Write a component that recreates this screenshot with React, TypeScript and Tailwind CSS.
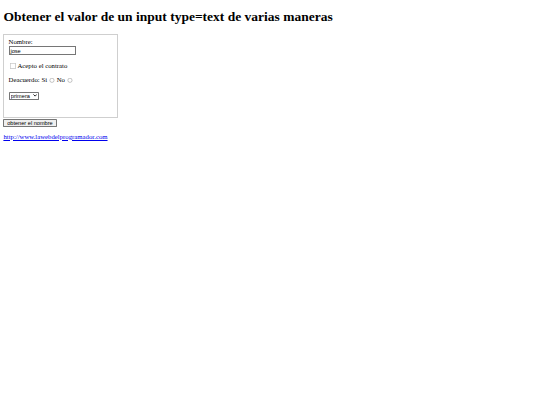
export default function App() {
  return (
    <div className="min-h-[405px] bg-white">
      {/* the page is drawn at 1280px wide and scaled down like the screenshot */}
      <div className="w-[1280px] px-[8px] pt-[21.44px] font-['Liberation_Serif',serif] text-[16px] leading-[18.4px] text-black [zoom:0.421875]">
        <h1 className="mb-[21.44px] text-[32px] font-bold leading-[37px]">
          Obtener el valor de un input type=text de varias maneras
        </h1>

        <form>
          <div className="h-[200px] w-[272px] border border-[#cfcfcf] px-[10px] pt-[9px]">
            Nombre:
            <br />
            <input
              type="text"
              defaultValue="jose"
              className="h-[21px] w-[159px] border border-[#767676] px-[2px] font-['Liberation_Sans',sans-serif] text-[13.33px]"
            />
            <p className="my-[16px]">
              <input type="checkbox" className="mx-[4px] mt-[3px] align-[-2px]" />
              Acepto el contrato
            </p>
            <p className="my-[16px]">
              Deacuerdo: Si
              <input type="radio" name="acuerdo" className="mx-[5px] mt-[3px] align-[-1px]" />
              No
              <input type="radio" name="acuerdo" className="mx-[5px] mt-[3px] align-[-1px]" />
            </p>
            <p className="my-[16px]">
              <span className="relative inline-block align-middle">
                <select className="block h-[19px] w-[73px] appearance-none rounded-[2px] border border-[#767676] bg-white pl-[3px] pr-[18px] font-['Liberation_Sans',sans-serif] text-[13.33px] leading-[17px]">
                  <option>primera</option>
                  <option>segunda</option>
                  <option>tercera</option>
                </select>
                <svg
                  viewBox="0 0 10 6"
                  className="pointer-events-none absolute right-[6px] top-[6px] h-[6px] w-[10px]"
                >
                  <path d="M1 1l4 4 4-4" fill="none" stroke="#000" strokeWidth="2" />
                </svg>
              </span>
            </p>
          </div>
          <button
            type="button"
            className="mt-[2px] block h-[20px] w-[126px] rounded-[2px] border border-[#767676] bg-[#efefef] px-[6px] font-['Liberation_Sans',sans-serif] text-[13.33px] leading-[16px]"
          >
            obtener el nombre
          </button>
        </form>

        <p className="mt-[13px]">
          <a href="#" className="text-[#0000ee] underline">
            http://www.lawebdelprogramador.com
          </a>
        </p>
      </div>
    </div>
  );
}
